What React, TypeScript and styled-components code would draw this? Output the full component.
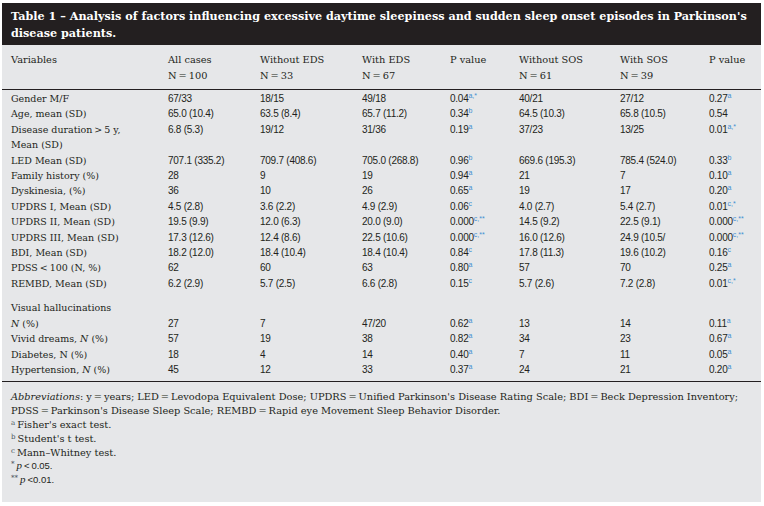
import React from "react";
import styled, { createGlobalStyle } from "styled-components";

const Global = createGlobalStyle`
  html, body { margin: 0; padding: 0; background: #ffffff; }
  body { font-family: "DejaVu Serif", serif; }
`;

const Sheet = styled.div`
  margin: 3px 0 0 2px;
  width: 759px;
  height: 499px;
  background: #e6e7e9;
  color: #231f20;
  box-sizing: border-box;
`;

const TitleBar = styled.div`
  background: #231f20;
  color: #ffffff;
  font-family: "DejaVu Serif", serif;
  font-weight: bold;
  font-size: 11.2px;
  line-height: 17px;
  padding: 5px 9px 3px 9px;
  height: 42px;
  box-sizing: border-box;
  white-space: nowrap;
`;

const cols = "157px 92px 102px 88px 69px 101px 89px 1fr";

const HeadRow = styled.div`
  display: grid;
  grid-template-columns: ${cols};
  padding: 7px 9px 5px 9px;
  border-bottom: 1.5px solid #231f20;
  font-family: "DejaVu Serif", serif;
  font-size: 9.8px;
  line-height: 16px;
`;

const Body = styled.div`
  padding: 1px 9px 4px 9px;
  border-bottom: 1.5px solid #231f20;
`;

const Row = styled.div<{ $gapTop?: boolean }>`
  display: grid;
  grid-template-columns: ${cols};
  line-height: 15.4px;
  margin-top: ${(p) => (p.$gapTop ? "9px" : "0")};
`;

const Label = styled.div`
  font-family: "DejaVu Serif", serif;
  font-size: 9.5px;
  color: #231f20;
  white-space: nowrap;
`;

const Val = styled.div`
  font-family: "Liberation Sans", Arial, sans-serif;
  font-size: 10px;
  letter-spacing: -0.25px;
  color: #231f20;
  white-space: nowrap;
`;

const Sup = styled.sup`
  font-size: 7px;
  color: #3f8fd2;
  vertical-align: 4px;
  line-height: 0;
  letter-spacing: 0;
`;

const Ital = styled.i`
  font-style: italic;
`;

const Foot = styled.div`
  padding: 8px 9px 0 9px;
  font-family: "DejaVu Serif", serif;
  font-size: 9.8px;
  line-height: 13.8px;
`;

const FootLine = styled.div`
  white-space: nowrap;
`;

const FootSup = styled.sup`
  font-size: 7px;
  vertical-align: 3px;
  line-height: 0;
  color: #4a5560;
  margin-right: 2px;
`;

const PItal = styled.span`
  font-family: "Liberation Serif", serif;
  font-style: italic;
  font-size: 11px;
`;

const FootNum = styled.span`
  font-family: "Liberation Sans", Arial, sans-serif;
  font-size: 9.5px;
`;

type Cell = string | { v: string; s: string };

type RowData = {
  label: React.ReactNode;
  cells: Cell[];
  gapTop?: boolean;
};

const rows: RowData[] = [
  { label: "Gender M/F", cells: ["67/33", "18/15", "49/18", { v: "0.04", s: "a,*" }, "40/21", "27/12", { v: "0.27", s: "a" }] },
  { label: "Age, mean (SD)", cells: ["65.0 (10.4)", "63.5 (8.4)", "65.7 (11.2)", { v: "0.34", s: "b" }, "64.5 (10.3)", "65.8 (10.5)", "0.54"] },
  {
    label: (
      <>
        Disease duration{"\u2009"}&gt;{"\u2009"}5 y,
        <br />
        Mean (SD)
      </>
    ),
    cells: ["6.8 (5.3)", "19/12", "31/36", { v: "0.19", s: "a" }, "37/23", "13/25", { v: "0.01", s: "a,*" }],
  },
  { label: "LED Mean (SD)", cells: ["707.1 (335.2)", "709.7 (408.6)", "705.0 (268.8)", { v: "0.96", s: "b" }, "669.6 (195.3)", "785.4 (524.0)", { v: "0.33", s: "b" }] },
  { label: "Family history (%)", cells: ["28", "9", "19", { v: "0.94", s: "a" }, "21", "7", { v: "0.10", s: "a" }] },
  { label: "Dyskinesia, (%)", cells: ["36", "10", "26", { v: "0.65", s: "a" }, "19", "17", { v: "0.20", s: "a" }] },
  { label: "UPDRS I, Mean (SD)", cells: ["4.5 (2.8)", "3.6 (2.2)", "4.9 (2.9)", { v: "0.06", s: "c" }, "4.0 (2.7)", "5.4 (2.7)", { v: "0.01", s: "c,*" }] },
  { label: "UPDRS II, Mean (SD)", cells: ["19.5 (9.9)", "12.0 (6.3)", "20.0 (9.0)", { v: "0.000", s: "c,**" }, "14.5 (9.2)", "22.5 (9.1)", { v: "0.000", s: "c,**" }] },
  { label: "UPDRS III, Mean (SD)", cells: ["17.3 (12.6)", "12.4 (8.6)", "22.5 (10.6)", { v: "0.000", s: "c,**" }, "16.0 (12.6)", "24.9 (10.5/", { v: "0.000", s: "c,**" }] },
  { label: "BDI, Mean (SD)", cells: ["18.2 (12.0)", "18.4 (10.4)", "18.4 (10.4)", { v: "0.84", s: "c" }, "17.8 (11.3)", "19.6 (10.2)", { v: "0.16", s: "c" }] },
  { label: <>PDSS{"\u2009"}&lt;{"\u2009"}100 (N, %)</>, cells: ["62", "60", "63", { v: "0.80", s: "a" }, "57", "70", { v: "0.25", s: "a" }] },
  { label: "REMBD, Mean (SD)", cells: ["6.2 (2.9)", "5.7 (2.5)", "6.6 (2.8)", { v: "0.15", s: "c" }, "5.7 (2.6)", "7.2 (2.8)", { v: "0.01", s: "c,*" }] },
  { label: "Visual hallucinations", cells: [], gapTop: true },
  { label: <><Ital>N</Ital> (%)</>, cells: ["27", "7", "47/20", { v: "0.62", s: "a" }, "13", "14", { v: "0.11", s: "a" }] },
  { label: <>Vivid dreams, <Ital>N</Ital> (%)</>, cells: ["57", "19", "38", { v: "0.82", s: "a" }, "34", "23", { v: "0.67", s: "a" }] },
  { label: "Diabetes, N (%)", cells: ["18", "4", "14", { v: "0.40", s: "a" }, "7", "11", { v: "0.05", s: "a" }] },
  { label: <>Hypertension, <Ital>N</Ital> (%)</>, cells: ["45", "12", "33", { v: "0.37", s: "a" }, "24", "21", { v: "0.20", s: "a" }] },
];

const heads: [string, string][] = [
  ["Variables", ""],
  ["All cases", "N\u2009=\u2009100"],
  ["Without EDS", "N\u2009=\u200933"],
  ["With EDS", "N\u2009=\u200967"],
  ["P value", ""],
  ["Without SOS", "N\u2009=\u200961"],
  ["With SOS", "N\u2009=\u200939"],
  ["P value", ""],
];

function renderCell(c: Cell, i: number) {
  if (typeof c === "string") return <Val key={i}>{c}</Val>;
  return (
    <Val key={i}>
      {c.v}
      <Sup>{c.s}</Sup>
    </Val>
  );
}

export default function App() {
  return (
    <>
      <Global />
      <Sheet>
        <TitleBar>
          Table 1 – Analysis of factors influencing excessive daytime sleepiness and sudden sleep onset episodes in Parkinson's
          <br />
          disease patients.
        </TitleBar>
        <HeadRow>
          {heads.map(([a, b], i) => (
            <div key={i}>
              {a}
              <br />
              {b}
            </div>
          ))}
        </HeadRow>
        <Body>
          {rows.map((r, i) => (
            <Row key={i} $gapTop={r.gapTop}>
              <Label>{r.label}</Label>
              {r.cells.map(renderCell)}
            </Row>
          ))}
        </Body>
        <Foot>
          <FootLine>
            <Ital>Abbreviations</Ital>: y{"\u2009"}={"\u2009"}years; LED{"\u2009"}={"\u2009"}Levodopa Equivalent Dose; UPDRS{"\u2009"}={"\u2009"}Unified Parkinson's Disease Rating Scale; BDI{"\u2009"}={"\u2009"}Beck Depression Inventory;
          </FootLine>
          <FootLine>
            PDSS{"\u2009"}={"\u2009"}Parkinson's Disease Sleep Scale; REMBD{"\u2009"}={"\u2009"}Rapid eye Movement Sleep Behavior Disorder.
          </FootLine>
          <FootLine>
            <FootSup>a</FootSup>Fisher's exact test.
          </FootLine>
          <FootLine>
            <FootSup>b</FootSup>Student's t test.
          </FootLine>
          <FootLine>
            <FootSup>c</FootSup>Mann–Whitney test.
          </FootLine>
          <FootLine>
            <FootSup>*</FootSup>
            <PItal>p</PItal>
            <FootNum>{"\u2009"}&lt;{"\u2009"}0.05.</FootNum>
          </FootLine>
          <FootLine>
            <FootSup>**</FootSup>
            <PItal>p</PItal>
            <FootNum>{"\u2009"}&lt;0.01.</FootNum>
          </FootLine>
        </Foot>
      </Sheet>
    </>
  );
}
